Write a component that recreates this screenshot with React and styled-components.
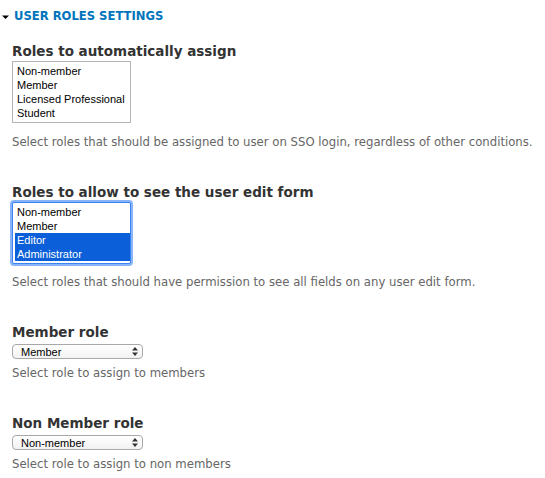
import styled, { createGlobalStyle } from "styled-components";

const GlobalStyle = createGlobalStyle`
    body {
        margin: 0;
        background: #ffffff;
        font-family: "DejaVu Sans", sans-serif;
    }
`

export default function App() {
    return (
        <Page>
            <GlobalStyle />
            <Legend>
                <Caret />
                USER ROLES SETTINGS
            </Legend>
            <Fields>
                <Field>
                    <Label>Roles to automatically assign</Label>
                    <ListBox>
                        <Option>Non-member</Option>
                        <Option>Member</Option>
                        <Option>Licensed Professional</Option>
                        <Option>Student</Option>
                    </ListBox>
                    <Description $gap={12}>
                        Select roles that should be assigned to user on SSO login, regardless of other conditions.
                    </Description>
                </Field>
                <Field>
                    <Label>Roles to allow to see the user edit form</Label>
                    <ListBox $focused>
                        <Option>Non-member</Option>
                        <Option>Member</Option>
                        <Option $selected>Editor</Option>
                        <Option $selected>Administrator</Option>
                    </ListBox>
                    <Description $gap={11}>
                        Select roles that should have permission to see all fields on any user edit form.
                    </Description>
                </Field>
                <Field>
                    <Label>Member role</Label>
                    <Select>
                        <span>Member</span>
                        <Arrows />
                    </Select>
                    <Description $gap={7}>Select role to assign to members</Description>
                </Field>
                <Field>
                    <Label>Non Member role</Label>
                    <Select>
                        <span>Non-member</span>
                        <Arrows />
                    </Select>
                    <Description $gap={7}>Select role to assign to non members</Description>
                </Field>
            </Fields>
        </Page>
    );
}

function Caret() {
    return (
        <CaretIcon width="7" height="6" viewBox="0 0 7 6">
            <path d="M0 1.5 L7 1.5 L3.5 5 Z" fill="#000" />
        </CaretIcon>
    );
}

function Arrows() {
    return (
        <ArrowsIcon width="6" height="9" viewBox="0 0 6 9">
            <path d="M3 0 L6 3.5 L0 3.5 Z" fill="#333" />
            <path d="M3 9 L6 5.5 L0 5.5 Z" fill="#333" />
        </ArrowsIcon>
    );
}

const Page = styled.div`
    width: 545px;
    height: 478px;
    padding: 9px 0 0 0;
    box-sizing: border-box;
    overflow: hidden;
`
const Legend = styled.div`
    display: flex;
    align-items: center;
    gap: 5px;
    padding-left: 2px;
    font-family: "DejaVu Sans", sans-serif;
    font-weight: 700;
    font-size: 11.6px;
    line-height: 15px;
    color: #0074bd;
`
const CaretIcon = styled.svg`
    display: block;
`
const Fields = styled.div`
    display: flex;
    flex-direction: column;
    gap: 35px;
    padding: 19px 12px 0 12px;
`
const Field = styled.div`
    display: flex;
    flex-direction: column;
    align-items: flex-start;
`
const Label = styled.div`
    font-family: "DejaVu Sans", sans-serif;
    font-weight: 700;
    font-size: 13.5px;
    line-height: 16px;
    color: #333333;
    margin-bottom: 2px;
`
const ListBox = styled.div`
    width: 119px;
    box-sizing: border-box;
    padding: 2px 0 2px 2px;
    border: 1px solid ${p => (p.$focused ? "#3b82f6" : "#b4b4b4")};
    background: #ffffff;
    box-shadow: ${p => (p.$focused ? "0 0 0 2px #8ab4f8" : "none")};
    border-radius: ${p => (p.$focused ? "2px" : "0")};
`
const Option = styled.div`
    font-family: "Liberation Sans", Arial, sans-serif;
    font-size: 11px;
    line-height: 14px;
    padding-left: 2px;
    color: ${p => (p.$selected ? "#ffffff" : "#000000")};
    background: ${p => (p.$selected ? "#0b5fd8" : "transparent")};
`
const Description = styled.div`
    margin-top: ${p => p.$gap}px;
    font-family: "DejaVu Sans", sans-serif;
    font-size: 11.7px;
    line-height: 14px;
    color: #666666;
`
const Select = styled.div`
    display: flex;
    align-items: center;
    justify-content: space-between;
    width: 131px;
    height: 15px;
    box-sizing: border-box;
    padding: 0 4px 0 8px;
    border: 1px solid #a8a8a8;
    border-radius: 4px;
    background: linear-gradient(#ffffff, #f2f2f2);
    font-family: "Liberation Sans", Arial, sans-serif;
    font-size: 11px;
    color: #000000;
    margin-top: 2px;
`
const ArrowsIcon = styled.svg`
    display: block;
`
